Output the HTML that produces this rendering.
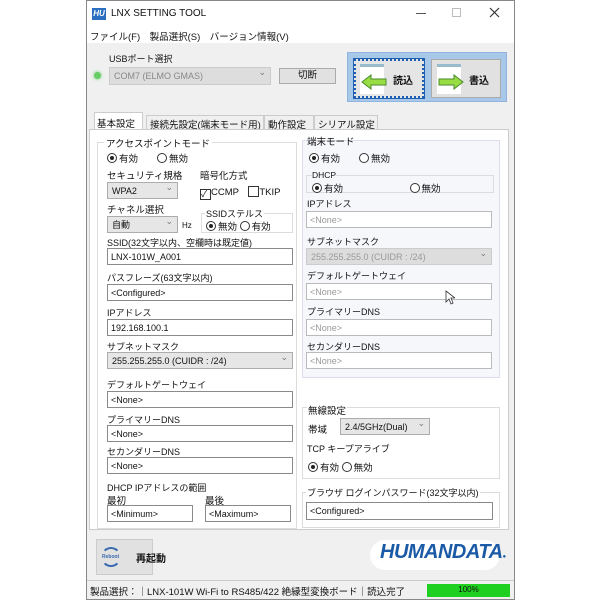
<!DOCTYPE html><html><head><meta charset="utf-8"><style>
*{box-sizing:border-box;margin:0;padding:0}
body{width:600px;height:600px;background:#fff;position:relative;overflow:hidden;font-family:"Liberation Sans","Noto Sans CJK JP",sans-serif;font-size:9.5px;color:#111}
.a{position:absolute;white-space:nowrap}
.inp{position:absolute;background:#fff;border:1px solid #8a8a8a;height:17px;padding:2px 3px;font-size:9px;line-height:12px;white-space:nowrap}
.dis{color:#999;border-color:#bbb}
.sel{position:absolute;background:#e6e6e6;border:1px solid #acacac;height:17px;padding:2px 4px;font-size:9px;line-height:12px;white-space:nowrap}
.sel:after{content:"⌄";position:absolute;right:4px;top:-2px;color:#777}
.rb{display:inline-block;width:10px;height:10px;border:1px solid #333;border-radius:50%;vertical-align:-1px;margin-right:2px;position:relative;background:#fff}
.rb.on:after{content:"";position:absolute;left:2px;top:2px;width:4px;height:4px;border-radius:50%;background:#222}
.grp{position:absolute;border:1px solid #dcdcdc}
</style></head><body>
<div class="a" style="left:86px;top:0;width:429px;height:600px;background:#f0f0f0;border:1px solid #888"></div>
<div class="a" style="left:87px;top:1px;width:427px;height:26px;background:#fff"></div>
<div class="a" style="left:92px;top:8px;width:14px;height:12px;background:#2a6fc0;color:#fff;font-size:8px;font-style:italic;font-weight:bold;line-height:12px;text-align:center">HU</div>
<div class="a" style="left:111px;top:8px;font-size:10px">LNX SETTING TOOL</div>
<div class="a" style="left:416px;top:13px;width:10px;height:1px;background:#555"></div>
<div class="a" style="left:452px;top:8px;width:9px;height:9px;border:1px solid #bbb"></div>
<svg class="a" style="left:489px;top:7px" width="11" height="11"><path d="M1 1L10 10M10 1L1 10" stroke="#333" stroke-width="1.2"/></svg>
<div class="a" style="left:87px;top:27px;width:427px;height:16px;background:#fff"></div>
<div class="a" style="left:90px;top:29px;font-size:9.5px">ファイル(F)　製品選択(S)　バージョン情報(V)</div>
<div class="a" style="left:109px;top:52px;font-size:9px">USBポート選択</div>
<div class="a" style="left:94px;top:72px;width:7px;height:7px;border-radius:50%;background:#6c6;box-shadow:0 0 3px #6c6"></div>
<div class="sel" style="left:109px;top:67px;width:162px;height:18px;background:#ddd;color:#888;border-color:#ccc">COM7 (ELMO GMAS)</div>
<div class="a" style="left:279px;top:68px;width:57px;height:16px;border:1px solid #aaa;background:#e1e1e1;text-align:center;line-height:14px">切断</div>
<div class="a" style="left:347px;top:52px;width:160px;height:50px;background:#a8c8ea;border:1px solid #90b4dd"></div>
<div class="a" style="left:354px;top:59px;width:70px;height:39px;background:#e5e5e5;border:2px dotted #1f5fb0;outline:1px solid #1f5fb0"></div>
<div class="a" style="left:360px;top:64px;width:24px;height:30px;background:#fff;border-top:3px solid #9bc"></div>
<svg class="a" style="left:361px;top:74px" width="26" height="16"><path d="M1 8L10 1V5H25V11H10V15Z" fill="#9d4" stroke="#4a8a2a"/></svg>
<div class="a" style="left:393px;top:72px;font-weight:bold;font-size:10px">読込</div>
<div class="a" style="left:431px;top:59px;width:70px;height:39px;background:#e1e1e1;border:1px solid #aaa"></div>
<div class="a" style="left:437px;top:64px;width:24px;height:30px;background:#fff;border-top:3px solid #9bc"></div>
<svg class="a" style="left:438px;top:74px" width="26" height="16"><path d="M25 8L16 1V5H1V11H16V15Z" fill="#9d4" stroke="#4a8a2a"/></svg>
<div class="a" style="left:469px;top:72px;font-weight:bold;font-size:10px">書込</div>
<!-- tabs -->
<div class="a" style="left:94px;top:112px;width:49px;height:18px;background:#fff;border:1px solid #ccc;border-bottom:none;padding:3px 2px">基本設定</div>
<div class="a" style="left:146px;top:115px;width:118px;height:15px;border:1px solid #ccc;padding:1px 3px;background:#f0f0f0">接続先設定(端末モード用)</div>
<div class="a" style="left:264px;top:115px;width:50px;height:15px;border:1px solid #ccc;padding:1px 3px">動作設定</div>
<div class="a" style="left:314px;top:115px;width:64px;height:15px;border:1px solid #ccc;padding:1px 3px">シリアル設定</div>
<div class="a" style="left:89px;top:129px;width:420px;height:401px;background:#fff;border:1px solid #ccc"></div>
<!-- left -->
<div class="grp" style="left:97px;top:142px;width:200px;height:387px"></div>
<div class="a" style="left:104px;top:136px;background:#fff;padding:0 2px">アクセスポイントモード</div>
<div class="a" style="left:107px;top:151px"><span class="rb on"></span>有効　　<span class="rb"></span>無効</div>
<div class="a" style="left:107px;top:168px">セキュリティ規格</div>
<div class="a" style="left:200px;top:168px">暗号化方式</div>
<div class="sel" style="left:107px;top:182px;width:71px">WPA2</div>
<div class="a" style="left:200px;top:184px"><span style="display:inline-block;width:11px;height:11px;border:1px solid #333;vertical-align:-2px;font-size:9px;line-height:9px">✓</span>CCMP　<span style="display:inline-block;width:11px;height:11px;border:1px solid #333;vertical-align:-2px"></span>TKIP</div>
<div class="a" style="left:107px;top:202px">チャネル選択</div>
<div class="sel" style="left:107px;top:216px;width:71px">自動</div>
<div class="a" style="left:182px;top:221px;font-size:8px">Hz</div>
<div class="grp" style="left:201px;top:213px;width:92px;height:20px"></div>
<div class="a" style="left:205px;top:207px;background:#fff;padding:0 1px;font-size:9px">SSIDステルス</div>
<div class="a" style="left:206px;top:219px"><span class="rb on"></span>無効 <span class="rb"></span>有効</div>
<div class="a" style="left:107px;top:236px;font-size:9px">SSID(32文字以内、空欄時は既定値)</div>
<div class="inp" style="left:107px;top:248px;width:186px">LNX-101W_A001</div>
<div class="a" style="left:107px;top:271px;font-size:9px">パスフレーズ(63文字以内)</div>
<div class="inp" style="left:107px;top:284px;width:186px">&lt;Configured&gt;</div>
<div class="a" style="left:107px;top:306px;font-size:9px">IPアドレス</div>
<div class="inp" style="left:107px;top:319px;width:186px">192.168.100.1</div>
<div class="a" style="left:107px;top:340px;font-size:9px">サブネットマスク</div>
<div class="sel" style="left:107px;top:352px;width:186px">255.255.255.0 (CUIDR : /24)</div>
<div class="a" style="left:107px;top:378px;font-size:9px">デフォルトゲートウェイ</div>
<div class="inp" style="left:107px;top:391px;width:186px">&lt;None&gt;</div>
<div class="a" style="left:107px;top:413px;font-size:9px">プライマリーDNS</div>
<div class="inp" style="left:107px;top:425px;width:186px">&lt;None&gt;</div>
<div class="a" style="left:107px;top:445px;font-size:9px">セカンダリーDNS</div>
<div class="inp" style="left:107px;top:457px;width:186px">&lt;None&gt;</div>
<div class="a" style="left:107px;top:481px;font-size:9px">DHCP IPアドレスの範囲</div>
<div class="a" style="left:107px;top:493px">最初</div>
<div class="a" style="left:205px;top:493px">最後</div>
<div class="inp" style="left:107px;top:505px;width:86px">&lt;Minimum&gt;</div>
<div class="inp" style="left:205px;top:505px;width:86px">&lt;Maximum&gt;</div>
<!-- right -->
<div class="a" style="left:302px;top:140px;width:198px;height:238px;background:#f5f7fb;border:1px solid #dde"></div>
<div class="a" style="left:307px;top:134px">端末モード</div>
<div class="a" style="left:309px;top:151px"><span class="rb on"></span>有効　　<span class="rb"></span>無効</div>
<div class="grp" style="left:306px;top:175px;width:188px;height:18px"></div>
<div class="a" style="left:312px;top:170px;font-size:8.5px;background:#f5f7fb">DHCP</div>
<div class="a" style="left:312px;top:181px"><span class="rb on"></span>有効　　　　　　　<span class="rb"></span>無効</div>
<div class="a" style="left:307px;top:197px;font-size:9px">IPアドレス</div>
<div class="inp dis" style="left:306px;top:211px;width:186px">&lt;None&gt;</div>
<div class="a" style="left:307px;top:235px;font-size:9px">サブネットマスク</div>
<div class="sel" style="left:306px;top:248px;width:186px;background:#ddd;color:#999;border-color:#ccc">255.255.255.0 (CUIDR : /24)</div>
<div class="a" style="left:307px;top:269px;font-size:9px">デフォルトゲートウェイ</div>
<div class="inp dis" style="left:306px;top:283px;width:186px">&lt;None&gt;</div>
<svg class="a" style="left:445px;top:290px" width="10" height="15"><path d="M1 1V12L4 9L6 14L8 13L6 8H10Z" fill="#fff" stroke="#333" stroke-width="0.8"/></svg>
<div class="a" style="left:307px;top:305px;font-size:9px">プライマリーDNS</div>
<div class="inp dis" style="left:306px;top:319px;width:186px">&lt;None&gt;</div>
<div class="a" style="left:307px;top:340px;font-size:9px">セカンダリーDNS</div>
<div class="inp dis" style="left:306px;top:352px;width:186px">&lt;None&gt;</div>
<div class="grp" style="left:302px;top:407px;width:198px;height:72px"></div>
<div class="a" style="left:307px;top:403px;background:#fff;padding:0 1px">無線設定</div>
<div class="a" style="left:308px;top:422px">帯域</div>
<div class="sel" style="left:340px;top:418px;width:90px">2.4/5GHz(Dual)</div>
<div class="a" style="left:307px;top:442px;font-size:9px">TCP キープアライブ</div>
<div class="a" style="left:308px;top:460px"><span class="rb on"></span>有効 <span class="rb"></span>無効</div>
<div class="grp" style="left:302px;top:492px;width:198px;height:36px"></div>
<div class="a" style="left:306px;top:486px;background:#fff;padding:0 1px;font-size:9px">ブラウザ ログインパスワード(32文字以内)</div>
<div class="inp" style="left:306px;top:502px;width:187px;height:18px">&lt;Configured&gt;</div>
<!-- bottom -->
<div class="a" style="left:96px;top:539px;width:57px;height:36px;background:#e1e1e1;border:1px solid #ccc"></div>
<div class="a" style="left:101px;top:547px;width:20px;height:20px;border:2px solid #3a6ab0;border-radius:50%;border-left-color:transparent;border-right-color:transparent"></div>
<div class="a" style="left:102px;top:554px;font-size:5px;color:#3a6ab0;font-weight:bold">Reboot</div>
<div class="a" style="left:136px;top:550px;font-weight:bold;font-size:10px">再起動</div>
<div class="a" style="left:370px;top:540px;width:130px;height:30px;background:#fff;border-radius:15px"></div>
<div class="a" style="left:380px;top:541px;font-size:20px;font-weight:bold;font-style:italic;color:#1b5aa6;letter-spacing:-0.5px">HUMANDATA<span style="font-size:6px">●</span></div>
<div class="a" style="left:87px;top:580px;width:427px;height:19px;border-top:1px solid #ccc"></div>
<div class="a" style="left:90px;top:584px;font-size:9.5px">製品選択：｜LNX-101W Wi-Fi to RS485/422 絶縁型変換ボード｜読込完了</div>
<div class="a" style="left:427px;top:584px;width:83px;height:13px;background:#20d020;font-size:8px;text-align:center;line-height:11px">100%</div>
</body></html>
